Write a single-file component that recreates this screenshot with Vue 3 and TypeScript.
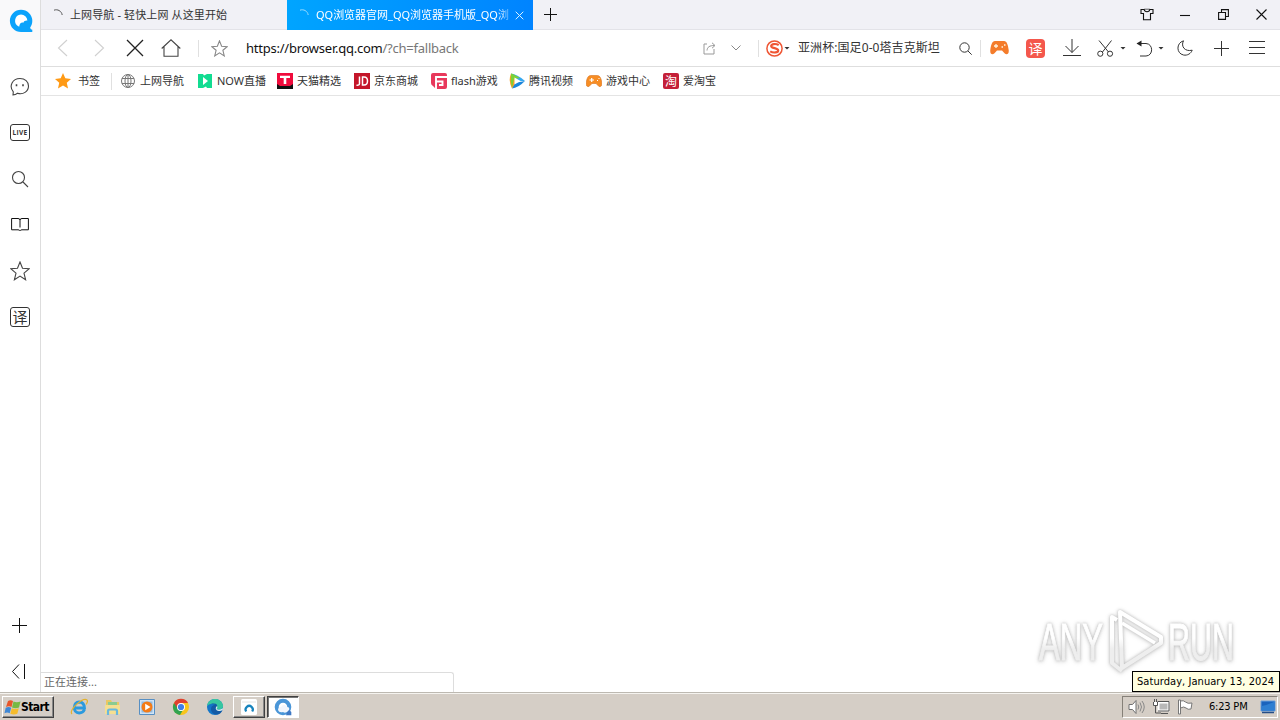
<script setup lang="ts">
interface Bookmark {
  kind: string
  label: string
  width: number
}

const bookmarks: Bookmark[] = [
  { kind: 'globe', label: '上网导航', width: 77 },
  { kind: 'now', label: 'NOW直播', width: 80 },
  { kind: 'tmall', label: '天猫精选', width: 77 },
  { kind: 'jd', label: '京东商城', width: 77 },
  { kind: 'flash', label: 'flash游戏', width: 78 },
  { kind: 'video', label: '腾讯视频', width: 77 },
  { kind: 'game', label: '游戏中心', width: 77 },
  { kind: 'tao', label: '爱淘宝', width: 70 },
]
</script>

<template>
  <div class="screen">
    <div class="browser">
      <aside class="side">
        <div class="logo">
          <svg width="24" height="24" viewBox="0 0 24 24">
            <path d="M12 .8a11.3 11.3 0 0 1 11.3 11.3c0 3-1 5-2.200 6.600q.5 1.800 2.200 2V23H12A11.100 11.100 0 0 1 12 .8z" fill="#0ba3fb" />
            <path d="M12 5.500a6.400 6.400 0 0 1 6.400 6c-1.700-.3-3.600.5-4 2.200-2-.7-4 1-4.200 4A6.300 6.300 0 0 1 12 5.500z" fill="#fff" />
          </svg>
        </div>
        <div class="cell">
          <svg width="20" height="20" viewBox="0 0 20 20" class="ln">
            <path d="M3.300 14.800C-1.500 9 2.500 1.500 10 1.500c5 0 8.500 3.200 8.500 7.500 0 5.500-5.500 9-11 7.200-1.300 1-2.700 1.600-4.500 1.700z" />
            <path d="M6.500 7.200v2M13 7.200v2" stroke-width="1.600" />
          </svg>
        </div>
        <div class="cell up"><span class="live">LIVE</span></div>
        <div class="cell">
          <svg width="18" height="18" viewBox="0 0 18 18" class="ln"><circle cx="7.500" cy="7.500" r="6" /><path d="M12 12l5 5" /></svg>
        </div>
        <div class="cell up">
          <svg width="18" height="16" viewBox="0 0 18 16" class="ln dark"><path d="M.6 2.500H7q2 0 2 1.500 0-1.500 2-1.500h6.400v11.300H11q-1.600 0-2 1-.4-1-2-1H.6zM9 3.500v8" /></svg>
        </div>
        <div class="cell">
          <svg width="20" height="20" viewBox="0 0 20 20" class="ln"><path d="M10 1l2.500 6.300 6.500.5-5 4.300 1.600 6.600-5.600-3.600-5.600 3.600L6 12.100 1 7.800l6.500-.5z" /></svg>
        </div>
        <div class="cell"><span class="trans">译</span></div>
        <div class="grow"></div>
        <div class="cell">
          <svg width="16" height="16" viewBox="0 0 16 16" class="ln dark"><path d="M7.500 0v15M0 7.500h15" /></svg>
        </div>
        <div class="cell end">
          <svg width="16" height="16" viewBox="0 0 16 16" class="ln dark"><path d="M7 .5L.500 7.500l6.500 7M12.500 0v15" /></svg>
        </div>
      </aside>

      <main class="main">
        <div class="tabs">
          <div class="tab">
            <svg class="spin" width="12" height="12" viewBox="0 0 12 12"><path d="M2 1.200C5.500-.2 9.600 2 10.200 6" /></svg>
            <span class="title first">上网导航 - 轻快上网 从这里开始</span>
          </div>
          <div class="tab active">
            <svg class="spin" width="12" height="12" viewBox="0 0 12 12"><path d="M2 1.200C5.500-.2 9.600 2 10.200 6" /></svg>
            <span class="title second">QQ浏览器官网_QQ浏览器手机版_QQ浏</span>
            <svg class="close" width="9" height="9" viewBox="0 0 9 9"><path d="M.7.700l7.600 7.600M8.300.7L.7 8.300" /></svg>
          </div>
          <svg class="newtab" width="13" height="13" viewBox="0 0 13 13"><path d="M6.500 0v13M0 6.500h13" /></svg>
          <div class="grow"></div>
          <svg class="win" width="14" height="13" viewBox="0 0 14 13"><path d="M1 1.500h3.200q.3 2.300 2.800 2.300t2.800-2.300H13v4h-2.500v6.300h-7V5.500H1z" /><path d="M4.200 1.200h5.600" opacity=".6" /></svg>
          <svg class="win" width="10" height="12" viewBox="0 0 10 12"><path d="M0 6.500h10" /></svg>
          <svg class="win restore" width="11" height="11" viewBox="0 0 11 11"><path d="M.6 3.500h6.900v6.900H.6zM3.500 3V.6h6.900v6.900H8" /></svg>
          <svg class="win last" width="11" height="11" viewBox="0 0 11 11"><path d="M.5.500l10 10M10.500.5l-10 10" /></svg>
        </div>

        <div class="bar">
          <div class="nav faint"><svg width="12" height="18" viewBox="0 0 12 18" class="ln"><path d="M10 1L1.500 9l8.500 8" /></svg></div>
          <div class="nav faint"><svg width="12" height="18" viewBox="0 0 12 18" class="ln"><path d="M2 1l8.500 8L2 17" /></svg></div>
          <div class="nav"><svg width="18" height="18" viewBox="0 0 18 18" class="ln x"><path d="M1 1l16 16M17 1L1 17" /></svg></div>
          <div class="nav"><svg width="20" height="18" viewBox="0 0 20 18" class="ln"><path d="M.7 9.500L10 .8l9.300 8.700M3 7.500v9.800h14V7.500" /></svg></div>
          <i class="sep s1"></i>
          <div class="fav"><svg width="17" height="17" viewBox="0 0 20 20" class="ln gray"><path d="M10 1l2.500 6.300 6.500.5-5 4.300 1.600 6.600-5.600-3.600-5.600 3.600L6 12.100 1 7.800l6.500-.5z" /></svg></div>
          <div class="url">https://browser.qq.com<span>/?ch=fallback</span></div>
          <svg class="share" width="13" height="13" viewBox="0 0 13 13"><path d="M4 2H1v10h10V7M4 8.500C4.300 5 6.500 3.500 11.500 3.500M9 .8l3 2.700-3 2.700" /></svg>
          <svg class="chev" width="10" height="6" viewBox="0 0 10 6"><path d="M.5.500L5 5 9.500.5" /></svg>
          <i class="sep s2"></i>
          <svg class="sogou" width="17" height="17" viewBox="0 0 17 17"><circle cx="8.500" cy="8.500" r="7.600" /><path d="M12.700 5.100C10 3.400 5.500 3.700 5.200 6c-.2 2.500 7 1.800 7 4.400 0 2.400-5 2.700-8 1" stroke-width="2.200" /></svg>
          <i class="caret c1"></i>
          <div class="search">亚洲杯:国足0-0塔吉克斯坦</div>
          <svg class="mag" width="13" height="13" viewBox="0 0 13 13"><circle cx="5.500" cy="5.500" r="4.700" /><path d="M9 9l3.700 3.700" /></svg>
          <i class="sep s3"></i>
          <svg class="pad" width="19" height="14" viewBox="0 0 19 14"><path d="M5 0h9c3 0 4 4 4.700 9 .5 4-2 5.600-4.200 3.200L12 9.500H7l-2.500 2.700C2.300 14.600-.2 13 .3 9 1 4 2 0 5 0z" fill="#f47c2b" /><path d="M4 5h4M6 3v4M11.500 6h1.500M14 4h1.500" stroke="#fff3df" stroke-width="1.300" /></svg>
          <span class="red">译</span>
          <svg class="dl" width="18" height="18" viewBox="0 0 18 18"><path d="M9 0v13.500M2.500 7L9 13.500 15.500 7M0 16.500h18" /></svg>
          <svg class="cut" width="17" height="17" viewBox="0 0 17 17"><path d="M2 .5l9.500 11.500M14.500.5L5.500 12" /><circle cx="3.300" cy="13.700" r="2.600" /><circle cx="13" cy="13.700" r="2.600" /></svg>
          <i class="caret c2"></i>
          <svg class="undo" width="17" height="17" viewBox="0 0 17 17"><path d="M1 3.500h9c7.500.3 7.500 12.300 0 12.500H4" /><path d="M5.500.5v6L.5 3.500z" class="solid" /></svg>
          <i class="caret c3"></i>
          <svg class="moon" width="16" height="16" viewBox="0 0 16 16"><path d="M6.500.8C-1 3-.8 13.500 6.500 15c4 .8 7.500-1.500 8.700-4.800C8 12 3.500 6.500 6.500.8z" /></svg>
          <svg class="add" width="15" height="15" viewBox="0 0 15 15"><path d="M7.500 0v15M0 7.500h15" /></svg>
          <svg class="menu" width="16" height="14" viewBox="0 0 16 14"><path d="M0 .5h16M0 6.500h16M0 12.500h16" /></svg>
        </div>

        <div class="marks">
          <svg class="gold" width="16" height="16" viewBox="0 0 20 20"><path d="M10 0l2.900 6.600 7.100.8-5.300 4.700 1.600 7.400L10 15.700l-6.300 3.800 1.600-7.400L0 7.400l7.100-.8z" fill="#ff9a15" /></svg>
          <span class="fl">书签</span>
          <i class="sep s4"></i>
          <div v-for="b in bookmarks" :key="b.label" class="mark" :style="{ width: b.width + 'px' }">
            <svg width="16" height="16" viewBox="0 0 16 16">
              <g v-if="b.kind === 'globe'" fill="none" stroke="#777">
                <circle cx="8" cy="8" r="6.500" /><ellipse cx="8" cy="8" rx="3" ry="6.500" /><path d="M8 1.500v13M2 5.500h12M2 10.500h12" />
              </g>
              <g v-else-if="b.kind === 'now'">
                <path d="M1 1h5l1 1.500L10 1h5v14h-5l-1-1.500L6 15H1z" fill="#12dc91" /><path d="M6 4v8l5-4z" fill="#fff" />
              </g>
              <g v-else-if="b.kind === 'tmall'">
                <path d="M0 0h16v16H0z" fill="#111" /><path d="M0 0h16v11l-3 2H3l-3-2z" fill="#f00b3c" /><path d="M3 2.700h10v2.300H9.300V11H6.700V5H3z" fill="#fff" />
              </g>
              <g v-else-if="b.kind === 'jd'">
                <path d="M0 0h16v16H0z" fill="#c4162a" /><path d="M5.500 3.500v7q0 2-3 1.700M8.500 4v8H10q3.500 0 3.500-4T10 4z" fill="none" stroke="#fff" stroke-width="1.500" />
              </g>
              <g v-else-if="b.kind === 'flash'">
                <path d="M2 0h12q2 0 2 2v12q0 2-2 2H5l-3-3q-2-1-2-3V2q0-2 2-2z" fill="#e8385b" /><path d="M16 4H5v12M5 8.500h6.500v3.500H8" fill="none" stroke="#fff" stroke-width="1.900" />
              </g>
              <g v-else-if="b.kind === 'video'">
                <path d="M2 .5Q8 1 16 8L9 8z" fill="#35a8f0" /><path d="M16 8Q9 15 3 15.500L5 10z" fill="#1b86dc" /><path d="M2 .5Q-1 8 3 15.500l3-5V5z" fill="#ff9d20" /><path d="M2 .5Q5 1 11 5l-6 1q-1 5-2 9Q1 8 2 .5z" fill="#7bd138" /><path d="M5.500 4.500v7l6-3.500z" fill="#fff" />
              </g>
              <g v-else-if="b.kind === 'game'">
                <path d="M4.500 2.500h7q3.500 0 4.300 7.500.3 4-2.800 3.500l-3-3H6l-3 3Q-.1 14 .2 10 1 2.500 4.500 2.500z" fill="#f78d24" stroke="#d77420" stroke-width=".6" /><path d="M3.500 7H8M5.700 5v4M11 7.500h1M12.500 5.500h1" stroke="#fff" stroke-width="1.200" />
              </g>
              <g v-else>
                <rect width="16" height="16" rx="2" fill="#c42038" /><text x="8" y="12.500" text-anchor="middle" class="tao">淘</text>
              </g>
            </svg>
            <span>{{ b.label }}</span>
          </div>
        </div>

        <div class="page">
          <div class="status">正在连接...</div>
        </div>
      </main>
    </div>

    <footer class="taskbar">
      <div class="start">
        <svg width="17" height="17" viewBox="0 0 17 17">
          <path d="M4 2q2.500-1.500 5 0L7.500 8Q5 6.500 2 8z" fill="#e8562a" /><path d="M9.500 2.500q3 1.500 7 0L15 8.500q-3.500 1.500-7 0z" fill="#77b943" />
          <path d="M1.700 8.700q3-1.500 5.500 0l-1.500 5.500q-2.500-1.500-5.200 0z" fill="#3f87d5" /><path d="M7.800 9.200q3.500 1.500 7 0l-1.500 5.500q-3.500 1.500-7 0z" fill="#f5bc2d" />
        </svg>
        <span>Start</span>
      </div>
      <svg class="app ie" width="18" height="18" viewBox="0 0 18 18"><path d="M14.500 11.500Q13 15 9.200 15q-5-.3-5-5.500.3-5.200 5-5.500 5 .2 5.300 6H5" fill="none" stroke="#2b9ade" stroke-width="2.800" /><path d="M2 16C-2 12 13-1 17 2q1.200 1.500-1 4.500" fill="none" stroke="#e3b22e" stroke-width="1.200" /></svg>
      <svg class="app" width="18" height="18" viewBox="0 0 18 18"><path d="M2 2h5l1 2h7v12H2z" fill="#e9c863" /><path d="M4 4h9v4H4z" fill="#8acb91" /><path d="M1 7h15v9H1z" fill="#f5df91" /><path d="M4 17v-4q0-1.500 1.500-1.500h6q1.500 0 1.500 1.500v4" fill="none" stroke="#69b8df" stroke-width="2.200" /></svg>
      <svg class="app" width="18" height="18" viewBox="0 0 18 18"><path d="M1.500 1.500h15v15h-15z" fill="#cfe3f5" stroke="#578fc3" /><path d="M3.500 3.500h11v11h-11z" fill="#90b9de" /><circle cx="9" cy="9" r="5.500" fill="#f47b16" /><path d="M7.200 5.700v6.600L12.500 9z" fill="#fff" /></svg>
      <svg class="app" width="18" height="18" viewBox="0 0 18 18"><circle cx="9" cy="9" r="8" fill="#f8c51b" /><path d="M9 9L2 5a8 8 0 0 0 6 12l3.500-6z" fill="#31a350" /><path d="M2 5a8 8 0 0 1 14 0H9L6 11z" fill="#df4030" /><circle cx="9" cy="9" r="4" fill="#fff" /><circle cx="9" cy="9" r="3.100" fill="#3e7ee8" /></svg>
      <svg class="app" width="18" height="18" viewBox="0 0 18 18"><circle cx="9" cy="9" r="8" fill="#1476c8" /><path d="M1 8C2 0 14-2 17 7c.7 4-3 5-6 4.300-1-.6 1-1.500 0-3.300C9 5 4 5 1 8z" fill="#37c6a0" /><path d="M5 6c5-1.500 7 1 6 2.800-1.200 1.200-1.200 3 1.500 3.700 2 .4 3.500 0 4-.6-2 6-10 6-11.500 0Q4.500 8 9 6.500 7 5.800 5 6z" fill="#145ba5" /><path d="M11 8c1.200 1.800-1 2.700 0 3.300 1.800.7 4.500.3 5.700-1.300v2c-2 1-4.500 1.500-6 .2-1.700-1.600-.9-2.700.3-4.200z" fill="#e4f2ef" /></svg>
      <div class="task">
        <svg width="16" height="16" viewBox="0 0 16 16"><rect width="16" height="16" rx="1.500" fill="#fff" /><path d="M1 3h14" stroke="#e4e4e4" /><path d="M5.200 12.500a3.600 3.600 0 1 1 6 0" fill="none" stroke="#1683bd" stroke-width="2.200" /></svg>
      </div>
      <div class="task on">
        <svg width="18" height="18" viewBox="0 0 18 18"><circle cx="9" cy="9" r="6.300" fill="#fff" stroke="#4a96d8" stroke-width="4" /><path d="M12 17.300h5.300V14l-3-3z" fill="#3d78c4" /><path d="M4 12q0-3 3-3 3-4 6 0 3 0 2 3-3 4-6 2-4 1-5-2z" fill="#f1f6fd" /></svg>
      </div>
      <div class="grow"></div>
      <div class="tray">
        <svg class="t1" width="18" height="16" viewBox="0 0 18 16"><path d="M1 5.500h3.500L8 1.500v13l-3.500-4H1z" fill="#fff" stroke="#707070" /><path d="M10 5.500q1.500 2.500 0 5M12 3.500q3 4.500 0 9M14 2q4.500 6 0 12" fill="none" stroke="#888" /></svg>
        <svg class="t2" width="17" height="16" viewBox="0 0 17 16"><path d="M5.500 3.500h10v8h-10z" fill="#b8b8b8" stroke="#fff" stroke-width="2" /><path d="M4.500 2.500h11.500v9.500H5M8 14.500h7M2.500 7v7H8" fill="none" stroke="#555" /><path d="M.5 3v3.500h4V3M1.500 0v3M3.500 0v3" fill="#fff" stroke="#555" /></svg>
        <svg class="t3" width="17" height="16" viewBox="0 0 17 16"><path d="M3.500 2q3-1 5 1t6.500 1l-1 6q-3 1-5-1t-5.500 0z" fill="#fff" stroke="#777" /><path d="M1.500 1h2v14h-2z" fill="#fff" stroke="#777" /></svg>
        <span class="clock">6:23 PM</span>
        <svg class="t4" width="16" height="14" viewBox="0 0 16 14"><path d="M1 1h14v10H1z" fill="#1a63bd" stroke="#6ba0dc" /><path d="M1.500 6Q8 5 14.500 1.500v9h-13z" fill="#2e7fd2" /><path d="M2 12.500h12" stroke="#254d86" stroke-width="1.500" /></svg>
      </div>
    </footer>

    <svg class="watermark" width="214" height="76" viewBox="0 0 214 76">
      <defs>
        <linearGradient id="fade" x1="0" y1="14" x2="0" y2="62" gradientUnits="userSpaceOnUse">
          <stop offset=".4" stop-color="#fff" /><stop offset=".62" stop-color="#eee" />
        </linearGradient>
      </defs>
      <g class="wm">
        <text x="5" y="55" textLength="64" lengthAdjust="spacingAndGlyphs">ANY</text>
        <text x="134" y="55" textLength="66" lengthAdjust="spacingAndGlyphs">RUN</text>
        <path d="M83 15l-5-3v46l10 8M86 7l41 25v6L88 63z" fill="none" stroke="url(#fade)" stroke-width="4" stroke-linejoin="round" />
        <path d="M88 18l33 20" fill="none" stroke="#fff" stroke-width="3.500" />
      </g>
    </svg>
    <div class="tip">Saturday, January 13, 2024</div>
  </div>
</template>

<style>
body { overflow: hidden; background: #fff; }
</style>

<style scoped>
* { box-sizing: border-box; }
svg { display: block; flex: none; }
.screen { position: relative; width: 1280px; height: 720px; display: flex; flex-direction: column; font: 11px/14px "Noto Sans", "Noto Sans CJK SC", sans-serif; color: #333; background: #fff; }
.browser { height: 692px; display: flex; }
.grow { flex: 1; }
.side { width: 41px; border-right: 1px solid #ddd; display: flex; flex-direction: column; }
.logo { height: 40px; margin-bottom: 24px; padding: 9px 0 0 9px; background: #f9f9fa; }
.cell { height: 46px; display: flex; align-items: center; justify-content: center; }
.cell.up { padding-bottom: 2px; }
.cell.end { margin-bottom: -3px; }
.ln { fill: none; stroke: #444; stroke-width: 1.1; }
.ln.dark { stroke: #111; stroke-width: 1; }
.live { width: 20px; height: 17px; border: 1px solid #333; border-radius: 3px; font: bold 6.500px/15px "Open Sans", sans-serif; text-align: center; letter-spacing: .3px; }
.trans { width: 20px; height: 20px; border: 1px solid #333; border-radius: 3px; font: 15px/17px "Noto Sans CJK SC", sans-serif; text-align: center; }
.main { width: 1239px; display: flex; flex-direction: column; }
.tabs { height: 30px; background: #f1f1f6; border-bottom: 1px solid #e3e3e8; display: flex; align-items: center; }
.tab { width: 246px; height: 30px; margin-bottom: -1px; display: flex; align-items: center; padding: 0 9px 0 11px; }
.spin { fill: none; stroke: #555; margin-right: 6px; }
.title { white-space: nowrap; }
.first { letter-spacing: .12px; }
.active { background: linear-gradient(100deg, #00a5ff, #0083ff); color: #fff; }
.active .spin { stroke: #9bdcff; }
.second { width: 194px; letter-spacing: -.02px; -webkit-mask-image: linear-gradient(to right, #000 180px, rgba(0, 0, 0, .35)); mask-image: linear-gradient(to right, #000 180px, rgba(0, 0, 0, .35)); }
.close { margin-left: auto; fill: none; stroke: #d9f2ff; }
.newtab { margin-left: 11px; fill: none; stroke: #111; }
.win { fill: none; stroke: #111; stroke-width: 1.1; margin-right: 28px; }
.win:nth-last-child(4) { margin-right: 26px; }
.win.restore { margin-right: 27px; }
.win.last { margin-right: 13px; }
.bar { height: 37px; border-bottom: 1px solid #dedede; display: flex; align-items: center; padding-left: 4px; }
.bar > svg { fill: none; stroke: #333; }
.nav { width: 36px; display: flex; justify-content: center; }
.faint .ln { stroke: #d0d0d0; }
.ln.x { stroke: #222; stroke-width: 1.3; }
.sep { width: 1px; height: 17px; background: #e0e0e0; flex: none; }
.s1 { margin-left: 9px; }
.fav { width: 41px; display: flex; justify-content: center; }
.ln.gray { stroke: #888; stroke-width: 1.300; }
.url { width: 457px; padding-left: 6px; font: 13px/18px "Noto Sans", sans-serif; letter-spacing: -.24px; color: #111; white-space: nowrap; }
.url span { color: #777; }
.bar .share { margin-left: 6px; stroke: #999; }
.bar .chev { margin-left: 15px; stroke: #888; }
.s2 { margin-left: 17px; }
.bar .sogou { margin-left: 7px; stroke: #ef5634; stroke-width: 1.500; }
.caret { width: 6px; height: 3px; background: #333; clip-path: polygon(0 0, 100% 0, 50% 100%); flex: none; }
.c1 { margin-left: 1px; }
.search { width: 152px; margin-left: 8px; font: 12px/18px "Noto Sans", "Noto Sans CJK SC", sans-serif; letter-spacing: .08px; white-space: nowrap; }
.mag { margin-left: 9px; }
.s3 { margin-left: 8px; }
.bar .pad { margin-left: 9px; stroke: none; }
.red { width: 19px; height: 19px; margin-left: 17px; border-radius: 4px; background: #f4574c; color: #fff; font: 14px/18px "Noto Sans CJK SC", sans-serif; text-align: center; }
.dl { margin-left: 18px; }
.cut { margin-left: 16px; }
.c2 { margin-left: 6px; }
.undo { margin-left: 10px; }
.undo .solid { fill: #222; stroke: none; }
.c3 { margin-left: 5px; }
.moon { margin-left: 13px; }
.add { margin-left: 21px; }
.menu { margin-left: 20px; }
.marks { height: 29px; border-bottom: 1px solid #e4e4e4; display: flex; align-items: center; padding-left: 14px; }
.fl { width: 33px; margin-left: 7px; }
.s4 { margin-right: 8px; }
.mark { display: flex; align-items: center; gap: 4px; flex: none; white-space: nowrap; }
.tao { font: 12px "Noto Sans CJK SC", sans-serif; fill: #fff; }
.page { flex: 1; display: flex; align-items: flex-end; }
.status { width: 413px; height: 20px; border: 1px solid #ddd; border-width: 1px 1px 0 0; border-radius: 0 3px 0 0; padding: 2px 0 0 3px; color: #666; }
.taskbar { height: 28px; background: #d5cec6; border-top: 1px solid #bdb9b1; box-shadow: inset 0 1px #f5f3ef; padding: 3px 2px 2px; display: flex; align-items: center; color: #000; }
.start { width: 52px; height: 22px; border: 1px solid; border-color: #fff #404040 #404040 #fff; box-shadow: inset -1px -1px #888; display: flex; align-items: center; padding-left: 1px; font: bold 12px/14px "DejaVu Sans Condensed", "DejaVu Sans", sans-serif; letter-spacing: -.6px; }
.app { margin-right: 16px; }
.app.ie { margin-left: 16px; }
.task { width: 32px; height: 22px; margin-left: -7px; border: 1px solid; border-color: #fff #404040 #404040 #fff; box-shadow: inset -1px -1px #888; display: flex; align-items: center; justify-content: center; }
.task.on { margin-left: 2px; background: #fff; border-color: #404040 #fff #fff #404040; box-shadow: inset 1px 1px #777; }
.tray { width: 156px; height: 22px; border: 1px solid; border-color: #858078 #fff #fff #858078; display: flex; align-items: center; }
.t1 { margin-left: 5px; }
.t2 { margin-left: 7px; }
.t3 { margin-left: 7px; }
.clock { width: 42px; margin-left: 15px; white-space: nowrap; font: 11px/14px "DejaVu Sans Condensed", sans-serif; letter-spacing: -.2px; }
.t4 { margin-left: 9px; }
.watermark { position: absolute; left: 1034px; top: 605px; }
.wm { filter: drop-shadow(0 0 1.500px #bbb) drop-shadow(0 1px 2px #ddd); }
.wm text { font: 51px "Liberation Sans", sans-serif; fill: url(#fade); stroke: url(#fade); stroke-width: 1px; }
.tip { position: absolute; right: 0; top: 671px; width: 148px; height: 21px; border: 1px solid #000; background: #ffffe1; padding: 3px 0 0 4px; font: 11px/14px "DejaVu Sans Condensed", sans-serif; letter-spacing: .06px; white-space: nowrap; color: #000; }
</style>
